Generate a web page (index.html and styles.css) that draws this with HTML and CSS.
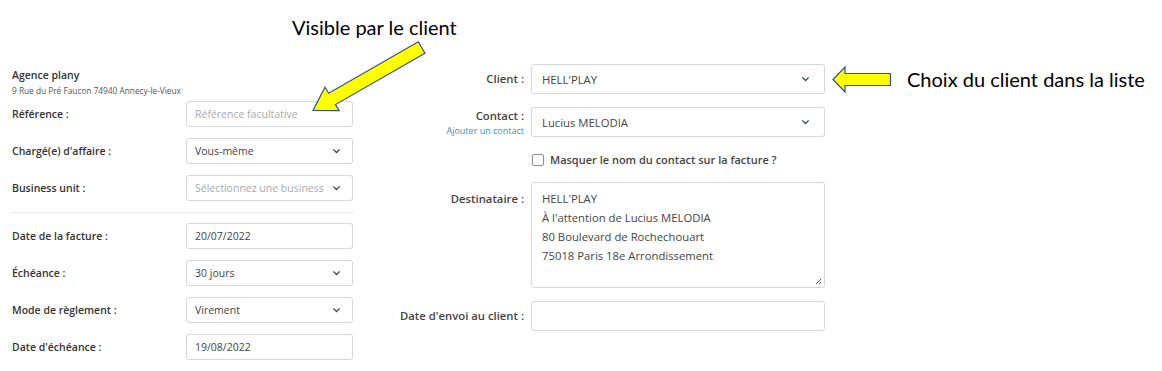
FILE: index.html
```html
<!DOCTYPE html>
<html lang="fr">
<head>
<meta charset="utf-8">
<link rel="stylesheet" href="styles.css">
</head>
<body>
<div class="page">
  <section class="left">
    <div class="company-name">Agence plany</div>
    <div class="company-addr">9 Rue du Pré Faucon 74940 Annecy-le-Vieux</div>

    <div class="lrow">
      <span class="llabel">Référence :</span>
      <div class="field"><span class="placeholder">Référence facultative</span></div>
    </div>
    <div class="lrow">
      <span class="llabel">Chargé(e) d'affaire :</span>
      <div class="field select"><span class="val">Vous-même</span><svg class="chev" viewBox="0 0 10 6"><path d="M1.5 1.2 5 4.6 8.5 1.2"/></svg></div>
    </div>
    <div class="lrow">
      <span class="llabel">Business unit :</span>
      <div class="field select"><span class="placeholder">Sélectionnez une business</span><svg class="chev" viewBox="0 0 10 6"><path d="M1.5 1.2 5 4.6 8.5 1.2"/></svg></div>
    </div>

    <div class="divider"></div>

    <div class="lrow">
      <span class="llabel">Date de la facture :</span>
      <div class="field"><span class="val">20/07/2022</span></div>
    </div>
    <div class="lrow">
      <span class="llabel">Échéance :</span>
      <div class="field select"><span class="val">30 jours</span><svg class="chev" viewBox="0 0 10 6"><path d="M1.5 1.2 5 4.6 8.5 1.2"/></svg></div>
    </div>
    <div class="lrow">
      <span class="llabel">Mode de règlement :</span>
      <div class="field select"><span class="val">Virement</span><svg class="chev" viewBox="0 0 10 6"><path d="M1.5 1.2 5 4.6 8.5 1.2"/></svg></div>
    </div>
    <div class="lrow">
      <span class="llabel">Date d'échéance :</span>
      <div class="field"><span class="val">19/08/2022</span></div>
    </div>
  </section>

  <section class="right">
    <div class="rrow">
      <div class="rlabel">Client :</div>
      <div class="rfield select"><span class="val">HELL'PLAY</span><svg class="chev" viewBox="0 0 10 6"><path d="M1.5 1.2 5 4.6 8.5 1.2"/></svg></div>
    </div>
    <div class="rrow">
      <div class="rlabel">Contact :<a class="add-link">Ajouter un contact</a></div>
      <div class="rfield select"><span class="val">Lucius MELODIA</span><svg class="chev" viewBox="0 0 10 6"><path d="M1.5 1.2 5 4.6 8.5 1.2"/></svg></div>
    </div>
    <div class="rrow check-row">
      <div></div>
      <label class="check"><span class="box"></span>Masquer le nom du contact sur la facture ?</label>
    </div>
    <div class="rrow top">
      <div class="rlabel pad">Destinataire :</div>
      <div class="rarea">
        <div>HELL'PLAY</div>
        <div>À l'attention de Lucius MELODIA</div>
        <div>80 Boulevard de Rochechouart</div>
        <div>75018 Paris 18e Arrondissement</div>
        <svg class="grip" viewBox="0 0 8 8"><path d="M7 2 2 7M7 5 5 7"/></svg>
      </div>
    </div>
    <div class="rrow">
      <div class="rlabel">Date d'envoi au client :</div>
      <div class="rfield"></div>
    </div>
  </section>
</div>

<div class="note note-visible">Visible par le client</div>
<div class="note note-choix">Choix du client dans la liste</div>
<svg class="arrow arrow-diag" width="1162" height="371" viewBox="0 0 1162 371">
  <polygon points="425,53.2 335.5,104.6 339.2,110.6 313,110.5 325,87.2 328.7,93.2 418.3,41.8"/>
</svg>
<svg class="arrow arrow-left" width="1162" height="371" viewBox="0 0 1162 371">
  <polygon points="890.5,73.5 845,73.5 845,67 833,79.5 845,92 845,85.5 890.5,85.5"/>
</svg>
</body>
</html>
```

FILE: styles.css
```css
* { box-sizing: border-box; }
html, body { margin: 0; padding: 0; background: #fff; }
body {
  width: 1162px;
  height: 371px;
  overflow: hidden;
  position: relative;
  font-family: "Open Sans", "Noto Sans", sans-serif;
  color: #333;
}
.page {
  display: flex;
  align-items: flex-start;
}
.left {
  width: 341px;
  margin-left: 12px;
  padding-top: 68px;
}
.company-name {
  font-size: 10.5px;
  font-weight: 600;
  line-height: 14px;
  color: #333;
}
.company-addr {
  font-size: 8.3px;
  line-height: 12px;
  color: #555;
  margin-top: 3px;
  margin-bottom: 4px;
  white-space: nowrap;
}
.lrow {
  display: grid;
  grid-template-columns: 174px 167px;
  align-items: center;
  height: 26px;
  margin-bottom: 11px;
}
.llabel {
  font-size: 10.5px;
  font-weight: 600;
  color: #333;
}
.field, .rfield {
  position: relative;
  display: flex;
  align-items: center;
  height: 26px;
  border: 1px solid #d4d7dc;
  border-radius: 3px;
  padding: 0 24px 0 8px;
  font-size: 10.5px;
  white-space: nowrap;
  overflow: hidden;
}
.val { color: #444; }
.placeholder { color: #aaa; }
.chev {
  position: absolute;
  right: 11px;
  top: 50%;
  width: 9px;
  height: 6px;
  margin-top: -3px;
  fill: none;
  stroke: #34495e;
  stroke-width: 1.5;
}
.divider {
  border-top: 1px solid #e6e6e6;
  height: 1px;
  margin: 0 0 10px 0;
}
.right {
  margin-left: 27px;
  padding-top: 64px;
}
.rrow {
  display: grid;
  grid-template-columns: 144px 294px;
  column-gap: 7px;
  align-items: center;
  margin-bottom: 13px;
}
.rrow.top { align-items: start; }
.rlabel {
  text-align: right;
  font-size: 11.3px;
  font-weight: 600;
  line-height: 16px;
  color: #444;
}
.rlabel.pad { padding-top: 9px; }
.add-link {
  display: block;
  font-size: 9px;
  font-weight: 400;
  line-height: 13px;
  color: #3c8dbc;
}
.rfield {
  height: 30px;
  padding-left: 10px;
  font-size: 11.3px;
}
.rfield .chev { right: 14px; }
.check-row { height: 19px; }
.check {
  display: flex;
  align-items: center;
  gap: 6px;
  font-size: 11px;
  font-weight: 600;
  color: #444;
  padding-left: 1px;
}
.box {
  width: 12px;
  height: 12px;
  border: 1px solid #8a8a8a;
  border-radius: 2px;
  background: #fff;
}
.rarea {
  position: relative;
  height: 106px;
  border: 1px solid #d4d7dc;
  border-radius: 3px;
  padding: 6px 10px;
  font-size: 11.3px;
  line-height: 19px;
  color: #444;
}
.grip {
  position: absolute;
  right: 2px;
  bottom: 2px;
  width: 8px;
  height: 8px;
  fill: none;
  stroke: #555;
  stroke-width: 1;
}
.note {
  position: absolute;
  font-family: "Lato", "Open Sans", sans-serif;
  font-size: 20px;
  color: #000;
  white-space: nowrap;
  line-height: 24px;
}
.note-visible { left: 292px; top: 15px; }
.note-choix { left: 907px; top: 67px; }
.arrow {
  position: absolute;
  left: 0;
  top: 0;
  pointer-events: none;
}
.arrow polygon {
  fill: #ffff00;
  stroke: #2f528f;
  stroke-width: 1.2;
  stroke-linejoin: miter;
}
```
